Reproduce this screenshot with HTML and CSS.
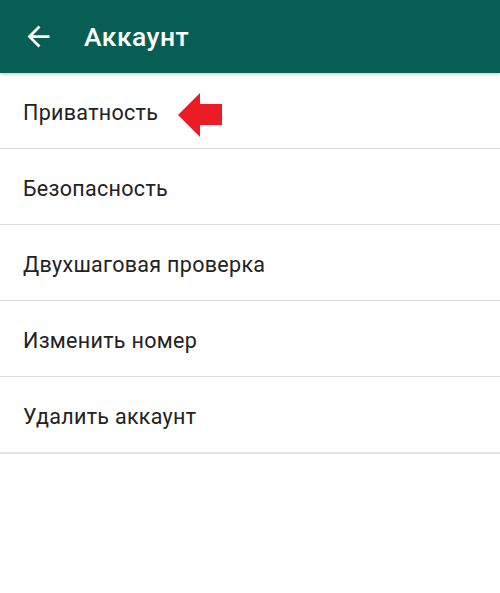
FILE: index.html
```html
<!DOCTYPE html>
<html lang="ru">
<head>
<meta charset="utf-8">
<link rel="stylesheet" href="styles.css">
</head>
<body>
<header class="toolbar">
  <svg class="back" viewBox="0 0 24 24" width="33" height="33"><path fill="#fff" d="M20 11H7.83l5.59-5.59L12 4l-8 8 8 8 1.41-1.41L7.83 13H20v-2z"/></svg>
  <h1 class="title">Аккаунт</h1>
</header>
<ul class="list">
  <li class="item">Приватность
    <svg class="pointer" viewBox="0 0 46 46" width="46" height="46"><polygon fill="#ed1c24" points="0,22 22,0 22,11 44,11 44,32 22,32 22,44"/></svg>
  </li>
  <li class="item">Безопасность</li>
  <li class="item">Двухшаговая проверка</li>
  <li class="item">Изменить номер</li>
  <li class="item last">Удалить аккаунт</li>
</ul>
</body>
</html>
```
FILE: styles.css
```css
* { box-sizing: border-box; }
html, body { margin: 0; padding: 0; background: #fff; }
body { font-family: Roboto, "Noto Sans", sans-serif; width: 500px; height: 593px; overflow: hidden; }
.toolbar {
  height: 73px;
  background: #075e54;
  display: flex;
  align-items: center;
  padding-left: 22px;
  box-shadow: 0 1px 4px rgba(0,0,0,0.25);
  position: relative;
  z-index: 1;
}
.back { display: block; }
.title {
  margin: 0 0 0 29px;
  color: #fff;
  font-size: 26.5px;
  font-weight: 500;
  letter-spacing: 0.45px;
}
.list { list-style: none; margin: 0; padding: 0; }
.item {
  position: relative;
  height: 76px;
  border-bottom: 1px solid #dcdcdc;
  display: flex;
  align-items: center;
  padding-left: 23px;
  padding-top: 3px;
  font-size: 21.5px;
  letter-spacing: 0.3px;
  color: #222;
}
.item.last { border-bottom: 2px solid #e4e4e4; height: 77px; }
.pointer { position: absolute; left: 178px; top: 20px; }
```
